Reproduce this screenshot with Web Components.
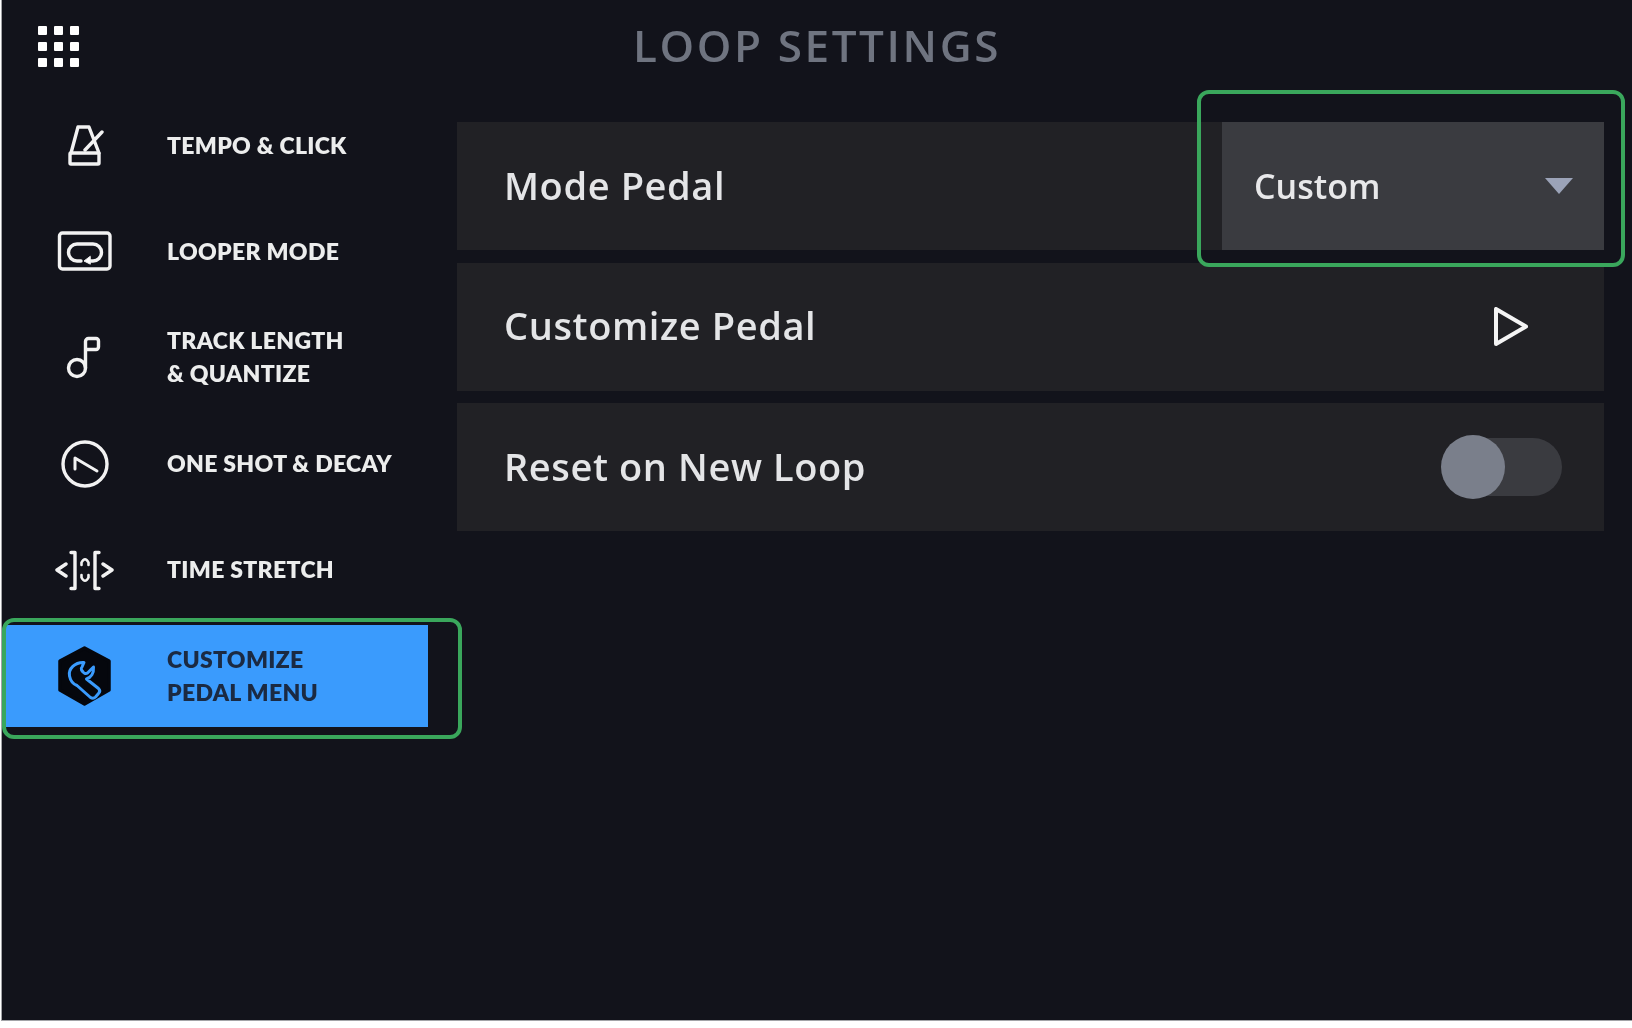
<!DOCTYPE html>
<html>
<head>
<meta charset="utf-8">
<title>Loop Settings</title>
<style>
  html, body { margin: 0; padding: 0; background: #fff; }
  body { height: 1028px; overflow: hidden; font-family: "Lato", "Liberation Sans", sans-serif; }
</style>
</head>
<body>
<loop-app>
  <app-header slot="header">LOOP SETTINGS</app-header>
  <side-menu slot="menu">
    <menu-item icon="metronome">TEMPO &amp; CLICK</menu-item>
    <menu-item icon="loop">LOOPER MODE</menu-item>
    <menu-item icon="note">TRACK LENGTH<br>&amp; QUANTIZE</menu-item>
    <menu-item icon="clock">ONE SHOT &amp; DECAY</menu-item>
    <menu-item icon="stretch">TIME STRETCH</menu-item>
    <menu-item icon="wrench" active>CUSTOMIZE<br>PEDAL MENU</menu-item>
  </side-menu>
  <setting-row slot="rows" label="Mode Pedal"><select-box>Custom</select-box></setting-row>
  <setting-row slot="rows" label="Customize Pedal"><play-arrow></play-arrow></setting-row>
  <setting-row slot="rows" label="Reset on New Loop"><toggle-switch></toggle-switch></setting-row>
  <hl-box slot="overlay" style="left:0;top:618px;width:460px;height:121px"></hl-box>
  <hl-box slot="overlay" style="left:1195px;top:90px;width:428px;height:177px"></hl-box>
</loop-app>

<script>
const icons = {
  metronome: `<path d="M24 12H35L45 38M24 12L17 38M31 35L48 17"/><rect x="16" y="38" width="29" height="11" rx="1"/>`,
  loop: `<rect x="5.5" y="12" width="50.5" height="36" rx="3"/><path d="M27 40H23a8.5 8.5 0 0 1 0-17H39a8.5 8.5 0 0 1 0 17H35"/><path d="M36 35.5L30 40L36 43Z" fill="#fff" stroke-width="1"/>`,
  note: `<circle cx="23" cy="41" r="8.500"/><path d="M31.500 41V14.500a3 3 0 0 1 3-3H42a2.500 2.500 0 0 1 2.500 2.500V20a2.500 2.500 0 0 1-2.500 2.500H32"/>`,
  clock: `<circle cx="31" cy="30" r="22"/><path d="M21 35V24L43 37" stroke-width="3"/>`,
  stretch: `<path d="M12 24L3 30L12 36M17 12.500H21V48.500H17M45 12.500H41V48.500H45M49 24L58 30L49 36"/><path d="M27.500 25V22.500Q31 16 34.500 22.500V25M27.500 35V37.500Q31 44 34.500 37.500V35" stroke-width="2.600"/>`,
  wrench: `<path d="M30.500 2L55 15V44L30.500 58L6 44V15Z" fill="#05070d" stroke="#05070d" stroke-width="3.500"/>
    <path d="M30 16.500C21 16 14 23 15.500 30C16.500 35 19 38 23 39.500L36.500 51.500C38 52.500 40 52.500 41.500 51L44.500 47.500C46 46 46 44 44.500 42.500L32.500 33C37 31.500 40 27 39.500 21L33.500 27C32 28 30 27.500 29 26L27.500 24C27 23 27 22 28 21Z" stroke="#3a9bfd" stroke-width="3" fill="none" stroke-linejoin="round"/>`
};

class LoopApp extends HTMLElement {
  constructor() {
    super();
    this.attachShadow({mode: 'open'}).innerHTML = `
      <style>
        :host {
          display: flex;
          flex-direction: column;
          position: relative;
          box-sizing: border-box;
          margin-left: 1px;
          height: 1021px;
          background: #12131b;
          border-left: 1px solid #a3a4a8;
          border-bottom: 1px solid #a3a4a8;
        }
        .body { display: flex; flex: 1; }
        .rows {
          flex: 1;
          display: flex;
          flex-direction: column;
          gap: 12.5px;
          padding: 30px 28px 0 0;
        }
      </style>
      <slot name="header"></slot>
      <div class="body">
        <slot name="menu"></slot>
        <div class="rows"><slot name="rows"></slot></div>
      </div>
      <slot name="overlay"></slot>`;
  }
}

class AppHeader extends HTMLElement {
  constructor() {
    super();
    let dots = '';
    for (let y of [26, 42, 58]) for (let x of [36, 52, 68]) dots += `<rect x="${x}" y="${y}" width="9" height="9" rx="1"/>`;
    this.attachShadow({mode: 'open'}).innerHTML = `
      <style>
        :host { display: flex; justify-content: center; align-items: center; height: 92px; position: relative; }
        svg { position: absolute; left: 0; top: 0; fill: #fff; filter: blur(.6px); }
        .title {
          font: 600 44px "Open Sans", "Liberation Sans", sans-serif;
          letter-spacing: 2.600px;
          color: #6f7480;
          filter: blur(.6px);
          margin-top: -2px;
        }
      </style>
      <svg width="90" height="80" viewBox="0 0 90 80">${dots}</svg>
      <div class="title"><slot></slot></div>`;
  }
}

class SideMenu extends HTMLElement {
  constructor() {
    super();
    this.attachShadow({mode: 'open'}).innerHTML = `
      <style>
        :host { display: flex; flex-direction: column; gap: 4.200px; box-sizing: border-box; width: 455px; padding: 2px 29px 0 3px; }
      </style>
      <slot></slot>`;
  }
}

class MenuItem extends HTMLElement {
  constructor() {
    super();
    this.attachShadow({mode: 'open'});
  }
  connectedCallback() {
    const icon = icons[this.getAttribute('icon')];
    this.shadowRoot.innerHTML = `
      <style>
        :host { display: flex; align-items: center; height: 102px; color: #eceded; }
        :host([active]) { background: #3a9bfd; color: #1b2a42; }
        svg { width: 60px; height: 60px; margin-left: 49px; flex: none; fill: none; stroke: #f2f2f2; stroke-width: 3.400; stroke-linejoin: round; stroke-linecap: round; filter: blur(.6px); }
        .label {
          margin-left: 53px;
          font: 800 23px/33px "Lato", "Liberation Sans", sans-serif;
          letter-spacing: .3px;
          filter: blur(.6px);
        }
      </style>
      <svg viewBox="0 0 60 60">${icon}</svg>
      <div class="label"><slot></slot></div>`;
  }
}

class SettingRow extends HTMLElement {
  constructor() {
    super();
    this.attachShadow({mode: 'open'});
  }
  connectedCallback() {
    this.shadowRoot.innerHTML = `
      <style>
        :host { display: flex; justify-content: space-between; align-items: center; height: 128px; background: #212125; }
        .label {
          padding-left: 47px;
          margin-top: -3px;
          font: 600 38px "Open Sans", "Liberation Sans", sans-serif;
          letter-spacing: .6px;
          color: #e4e5e7;
          filter: blur(.6px);
        }
      </style>
      <div class="label">${this.getAttribute('label')}</div>
      <slot></slot>`;
  }
}

class SelectBox extends HTMLElement {
  constructor() {
    super();
    this.attachShadow({mode: 'open'}).innerHTML = `
      <style>
        :host {
          display: flex; justify-content: space-between; align-items: center;
          box-sizing: border-box; width: 382px; height: 128px; padding: 0 31px 0 32px;
          background: #3a3b40; color: #e8e8ea;
          font: 600 34px "Open Sans", "Liberation Sans", sans-serif;
        }
        .val { filter: blur(.6px); }
        svg { display: block; filter: blur(.6px); }
      </style>
      <div class="val"><slot></slot></div>
      <svg width="28" height="16" viewBox="0 0 28 16"><path d="M0 0H28L14 16Z" fill="#9ba3b8"/></svg>`;
  }
}

class PlayArrow extends HTMLElement {
  constructor() {
    super();
    this.attachShadow({mode: 'open'}).innerHTML = `
      <style>
        :host { display: block; margin-right: 75px; height: 42px; }
        svg { display: block; filter: blur(.5px); }
      </style>
      <svg width="36" height="42" viewBox="0 0 36 42"><path d="M3 3V38L33 20.500Z" fill="none" stroke="#f4f4f4" stroke-width="4" stroke-linejoin="round"/></svg>`;
  }
}

class ToggleSwitch extends HTMLElement {
  constructor() {
    super();
    this.attachShadow({mode: 'open'}).innerHTML = `
      <style>
        :host { display: flex; align-items: center; position: relative; box-sizing: border-box; width: 121px; height: 65px; margin-right: 42px; padding-left: 12px; }
        .track { flex: 1; height: 58px; border-radius: 29px; background: #3a3b40; }
        .knob { position: absolute; left: 0; top: 0; width: 64px; height: 64px; border-radius: 50%; background: #7a7f8b; }
      </style>
      <div class="track"></div>
      <div class="knob"></div>`;
  }
}

class HlBox extends HTMLElement {
  constructor() {
    super();
    this.attachShadow({mode: 'open'}).innerHTML = `
      <style>
        :host { display: block; position: absolute; box-sizing: border-box; border: 4px solid #3aa75c; border-radius: 12px; pointer-events: none; }
      </style>`;
  }
}

customElements.define('loop-app', LoopApp);
customElements.define('app-header', AppHeader);
customElements.define('side-menu', SideMenu);
customElements.define('menu-item', MenuItem);
customElements.define('setting-row', SettingRow);
customElements.define('select-box', SelectBox);
customElements.define('play-arrow', PlayArrow);
customElements.define('toggle-switch', ToggleSwitch);
customElements.define('hl-box', HlBox);
</script>
</body>
</html>
